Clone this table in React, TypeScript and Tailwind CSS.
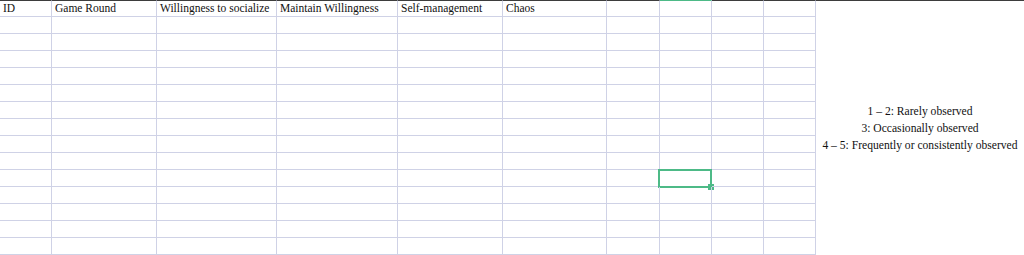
const columns = [
  { title: "ID", w: "w-[52px]" },
  { title: "Game Round", w: "w-[105px]" },
  { title: "Willingness to socialize", w: "w-[120px]" },
  { title: "Maintain Willingness", w: "w-[121px]" },
  { title: "Self-management", w: "w-[105px]" },
  { title: "Chaos", w: "w-[104px]" },
  { title: "", w: "w-[53px]" },
  { title: "", w: "w-[52px]" },
  { title: "", w: "w-[52px]" },
  { title: "", w: "w-[52px]" },
];

const ROWS = 15;
const SEL_ROW = 10;
const SEL_COL = 7;

const legend: Record<number, string> = {
  5: "1 – 2: Rarely observed",
  6: "3: Occasionally observed",
  7: "4 – 5: Frequently or consistently observed",
};

export default function App() {
  return (
    <div
      className="flex h-[255px] w-[1024px] overflow-hidden bg-white text-[11.5px] text-[#111]"
      style={{ fontFamily: '"Liberation Serif", "DejaVu Serif", serif' }}
    >
      <div className="flex flex-col">
        {Array.from({ length: ROWS }).map((_, r) => (
          <div key={r} className="flex">
            {columns.map((c, ci) => (
              <div
                key={ci}
                className={`relative box-border h-[17px] shrink-0 border-r border-b border-[#cfd2e6] ${c.w} ${
                  r === 0 ? "border-t border-t-[#3d3d3d]" : ""
                } ${r === 0 && ci === SEL_COL ? "border-t-[#4dba87]" : ""}`}
              >
                {r === 0 && (
                  <span className="block truncate pl-[3px] leading-[15px]">{c.title}</span>
                )}
                {r === SEL_ROW && ci === SEL_COL && (
                  <div className="absolute -top-[1px] -left-[2px] h-[19px] w-[54px] border-2 border-[#4dba87]">
                    <div className="absolute -right-[4px] -bottom-[4px] h-[6px] w-[6px] bg-[#4dba87]" />
                  </div>
                )}
              </div>
            ))}
          </div>
        ))}
      </div>
      <div className="flex flex-1 flex-col border-t border-[#3d3d3d] text-[11.6px]">
        <div className="h-[18px]" />
        {Array.from({ length: ROWS - 1 }).map((_, r) => (
          <div key={r} className="flex h-[17px] items-center justify-center whitespace-nowrap">
            {legend[r] ?? ""}
          </div>
        ))}
      </div>
    </div>
  );
}
